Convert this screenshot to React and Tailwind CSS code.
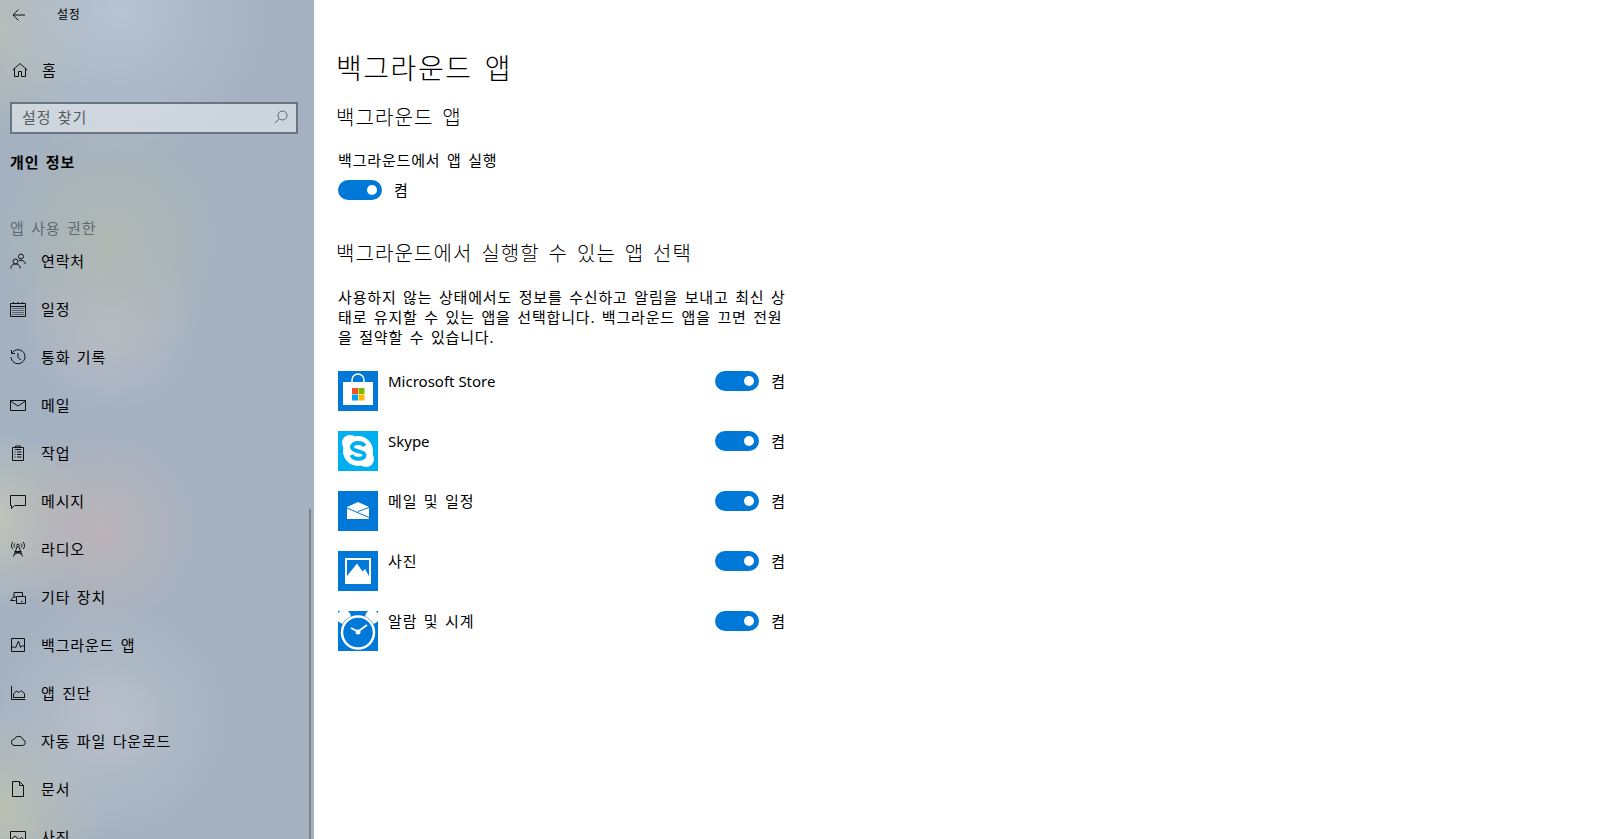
import React from 'react';

const FONT = "font-['Noto_Sans','Noto_Sans_CJK_KR',sans-serif]";
// Malgun-like hangul spacing
const KO = 'tracking-[0.055em] [word-spacing:0.125em]';

const Ico = ({ children }) => (
  <svg width="16" height="16" viewBox="0 0 16 16" fill="none" stroke="#111" strokeWidth="1" className="shrink-0">
    {children}
  </svg>
);

const navIcons = {
  contacts: (
    <Ico>
      <circle cx="5.5" cy="8.5" r="2.5" />
      <path d="M0.8 15.5c0-3 2-4.5 4.7-4.5s4.7 1.500 4.700 4.500" />
      <circle cx="11" cy="3.500" r="2.500" />
      <path d="M9 7.500c2.800-.8 6 .5 6.500 3.500" />
    </Ico>
  ),
  calendar: (
    <Ico>
      <path d="M0.500 2.500h15v13h-15z" />
      <path d="M0.500 5.500h15M3.500 1v2M8 1v2M12.500 1v2" />
      <path d="M2.500 7.500h11M2.500 9.500h11M2.500 11.500h11M2.500 13.500h11" strokeDasharray="1 1" />
    </Ico>
  ),
  history: (
    <Ico>
      <path d="M2.200 3.800A7 7 0 1 1 1 8" />
      <path d="M1.500 1v3.500H5M8 4v4.500l3 2.500" />
    </Ico>
  ),
  mail: (
    <Ico>
      <path d="M0.500 3.500h15v10h-15z" />
      <path d="M0.500 4l7.500 5 7.500-5" />
    </Ico>
  ),
  task: (
    <Ico>
      <path d="M2.500 2.500h11v13h-11zM5.500 2.500V1h5v1.500M5 4.500h6" />
      <path d="M4.500 7h1M7 7h4.500M4.500 9.500h1M7 9.500h4.500M4.500 12h1M7 12h4.500" />
    </Ico>
  ),
  message: (
    <Ico>
      <path d="M0.500 2.500h15v10H4.500l-3 3v-3h-1z" />
    </Ico>
  ),
  radio: (
    <Ico>
      <circle cx="8" cy="4.500" r="1.300" />
      <path d="M7 6l-3.500 9.500M9 6l3.500 9.500M5.500 10.500h5M4.500 13l7-2.500M11.500 13l-7-2.500" />
      <path d="M4.800 2.500c-1 1.300-1 2.700 0 4M11.200 2.500c1 1.300 1 2.700 0 4M2.800 1c-1.800 2.300-1.800 5.200 0 7M13.200 1c1.800 2.300 1.800 5.200 0 7" />
    </Ico>
  ),
  devices: (
    <Ico>
      <path d="M4 8V3.500h8.500V7" />
      <path d="M5.500 11.500H0.500L3.500 8h2.500" />
      <path d="M6.500 7.500h9v7h-9z" />
      <path d="M11 12.500h1.500" />
    </Ico>
  ),
  background: (
    <Ico>
      <path d="M1.500 1.500h13v13h-13z" />
      <path d="M1.500 11l2.500-1.500 1.500 1.500 3-7 2 6.500 1-1.500h3" />
    </Ico>
  ),
  diagnostics: (
    <Ico>
      <path d="M1.500 1v13.500H15.500" />
      <path d="M3.500 12.500h11M3.500 12.500V9l3-3 2.500 1.500 2-2 3.500 3v4.500" />
    </Ico>
  ),
  cloud: (
    <Ico>
      <path d="M4 12.500h8.500a3 3 0 0 0 .5-5.900A4.500 4.500 0 0 0 4.500 6 3.300 3.300 0 0 0 4 12.500z" />
    </Ico>
  ),
  document: (
    <Ico>
      <path d="M2.500 0.500h7l4 4v11h-11z" />
      <path d="M9.500 0.500v4h4" />
    </Ico>
  ),
  photo: (
    <Ico>
      <path d="M0.500 2.500h15v11h-15z" />
      <path d="M0.500 11l4.500-4 4 3.500 2.500-2 4 3.500" />
    </Ico>
  ),
};

const navItems = [
  ['contacts', '연락처'],
  ['calendar', '일정'],
  ['history', '통화 기록'],
  ['mail', '메일'],
  ['task', '작업'],
  ['message', '메시지'],
  ['radio', '라디오'],
  ['devices', '기타 장치'],
  ['background', '백그라운드 앱'],
  ['diagnostics', '앱 진단'],
  ['cloud', '자동 파일 다운로드'],
  ['document', '문서'],
  ['photo', '사진'],
];

const Toggle = () => (
  <div className="flex items-center gap-3">
    <div className="flex h-5 w-11 items-center justify-end rounded-full bg-[#0078d7] pr-[5px]">
      <div className="h-2.5 w-2.5 rounded-full bg-white" />
    </div>
    <span className={`text-[15px] leading-5 text-black ${KO}`}>켬</span>
  </div>
);

const StoreIcon = () => (
  <svg width="40" height="40" viewBox="0 0 40 40">
    <rect width="40" height="40" fill="#0078d7" />
    <path d="M14 12V9a6 6 0 0 1 12 0v3" fill="none" stroke="#fff" strokeWidth="1.500" />
    <path d="M5 11h30v23H5z" fill="#fff" />
    <rect x="14" y="17" width="6" height="6" fill="#f25022" />
    <rect x="20.500" y="17" width="6" height="6" fill="#7fba00" />
    <rect x="14" y="23.500" width="6" height="6" fill="#00a4ef" />
    <rect x="20.500" y="23.500" width="6" height="6" fill="#ffb900" />
  </svg>
);

const SkypeIcon = () => (
  <svg width="40" height="40" viewBox="0 0 40 40">
    <rect width="40" height="40" fill="#00aff0" />
    <circle cx="12" cy="12" r="8" fill="#fff" />
    <circle cx="28" cy="28" r="8" fill="#fff" />
    <circle cx="20" cy="20" r="15" fill="#fff" />
    <path d="M26.500 15c-1-2-3.500-3-6.500-3-3.500 0-6 1.600-6 4 0 5.500 12.500 3.200 12.500 8 0 2.300-2.500 3.800-6 3.800-3.500 0-6-1.300-7-3.800" fill="none" stroke="#00aff0" strokeWidth="4" />
  </svg>
);

const MailIcon = () => (
  <svg width="40" height="40" viewBox="0 0 40 40">
    <rect width="40" height="40" fill="#0078d7" />
    <path d="M20 11l11 5v12H9V16z" fill="#fff" />
    <path d="M9 17l22 9.500M31 16.500l-11 4" fill="none" stroke="#0078d7" strokeWidth="1" />
  </svg>
);

const PhotoIcon = () => (
  <svg width="40" height="40" viewBox="0 0 40 40">
    <rect width="40" height="40" fill="#0078d7" />
    <path d="M7 7h26v26H7z" fill="#fff" />
    <path d="M9 9h22v16l-4-7-2.500 2.500-5.500-8L9 25z" fill="#0078d7" />
  </svg>
);

const AlarmIcon = () => (
  <svg width="40" height="40" viewBox="0 0 40 40">
    <rect width="40" height="40" fill="#0078d7" />
    <circle cx="6" cy="6" r="7" fill="#fff" />
    <circle cx="34" cy="6" r="7" fill="#fff" />
    <circle cx="20" cy="22" r="18" fill="#0078d7" />
    <circle cx="20" cy="21.500" r="16" fill="none" stroke="#fff" strokeWidth="2.500" />
    <path d="M20 20.500l9-6.500M20 20.500l-7-3.500" stroke="#fff" strokeWidth="1.800" />
    <circle cx="20" cy="21" r="2.500" fill="#fff" />
  </svg>
);

const apps = [
  [StoreIcon, 'Microsoft Store', ''],
  [SkypeIcon, 'Skype', ''],
  [MailIcon, '메일 및 일정', KO],
  [PhotoIcon, '사진', KO],
  [AlarmIcon, '알람 및 시계', KO],
];

export default function App() {
  return (
    <div className={`flex h-[839px] w-[1609px] overflow-hidden bg-white text-black ${FONT}`}>
      {/* sidebar */}
      <aside className="relative h-full w-[314px] shrink-0 overflow-hidden bg-[#a3b1c1] bg-[radial-gradient(circle_at_120px_10px,#b6c3d0_0,transparent_150px),radial-gradient(circle_at_0px_30px,#b8bcb4_0,transparent_110px),radial-gradient(circle_at_110px_240px,#b0b8b2_0,transparent_130px),radial-gradient(circle_at_110px_325px,#bcbdc6_0,transparent_90px),radial-gradient(circle_at_100px_530px,#bbb4b8_0,transparent_110px),radial-gradient(circle_at_0px_520px,#c0c5ba_0,transparent_90px),radial-gradient(circle_at_110px_720px,#b9c0ca_0,transparent_120px),radial-gradient(circle_at_0px_810px,#bcc0b4_0,transparent_110px)]">
        <div className="flex h-[30px] items-center pl-3">
          <svg width="14" height="14" viewBox="0 0 14 14" fill="none" stroke="#111" strokeWidth="1">
            <path d="M13 7H1M6.500 1.500L1 7l5.500 5.500" />
          </svg>
          <span className={`ml-[31px] text-xs leading-4 ${KO}`}>설정</span>
        </div>

        <div className="mt-[24px] flex h-8 items-center gap-[14px] pl-3">
          <svg width="16" height="16" viewBox="0 0 16 16" fill="none" stroke="#111" strokeWidth="1">
            <path d="M0.800 8L8 1.500 15.200 8M2.500 6.500v8h4V9.500h3v5h4v-8" />
          </svg>
          <span className={`text-[15px] leading-5 ${KO}`}>홈</span>
        </div>

        <div className="mx-[10px] mt-[16px] flex h-[32px] w-[288px] items-center justify-between border-2 border-[#6a7480] bg-white/45 pb-[2px] pl-[10px] pr-2">
          <span className={`text-[15px] leading-5 text-[#555c63] ${KO}`}>설정 찾기</span>
          <svg width="14" height="14" viewBox="0 0 14 14" fill="none" stroke="#5b6168" strokeWidth="1">
            <circle cx="8.500" cy="5.500" r="4.500" />
            <path d="M5.300 8.700L1 13" />
          </svg>
        </div>

        <div className={`mt-[18px] pl-[10px] text-[15px] font-bold leading-5 ${KO}`}>개인 정보</div>

        <div className={`mt-[46px] pl-[10px] text-[15px] leading-5 text-[#5f6973] ${KO}`}>앱 사용 권한</div>

        <nav className="mt-[-1px]">
          {navItems.map(([icon, label]) => (
            <div key={label} className="flex h-12 items-center gap-[15px] pl-[10px]">
              {navIcons[icon]}
              <span className={`text-[15px] leading-5 ${KO}`}>{label}</span>
            </div>
          ))}
        </nav>

        {/* scrollbar */}
        <div className="absolute bottom-0 right-[3px] h-[330px] w-[2px] bg-[#7d8287]" />
      </aside>

      {/* content */}
      <main className="flex-1 pl-[22px]">
        <h1 className={`mt-[48px] text-[28px] font-light leading-10 ${KO}`}>백그라운드 앱</h1>
        <h2 className={`mt-[16px] text-xl font-light leading-7 ${KO}`}>백그라운드 앱</h2>

        <div className={`ml-[2px] mt-[18px] text-[15px] leading-5 ${KO}`}>백그라운드에서 앱 실행</div>
        <div className="ml-[2px] mt-[10px] w-fit"><Toggle /></div>

        <h2 className={`mt-[40px] text-xl font-light leading-7 ${KO}`}>백그라운드에서 실행할 수 있는 앱 선택</h2>

        <p className={`ml-[2px] mt-[19px] text-[15px] leading-5 ${KO}`}>
          사용하지 않는 상태에서도 정보를 수신하고 알림을 보내고 최신 상<br />
          태로 유지할 수 있는 앱을 선택합니다. 백그라운드 앱을 끄면 전원<br />
          을 절약할 수 있습니다.
        </p>

        <div className="ml-[2px] mt-[24px] flex w-[448px] flex-col gap-5">
          {apps.map(([Icon, name, spacing]) => (
            <div key={name} className="flex h-10 items-start justify-between">
              <div className="flex items-start gap-[10px]">
                <Icon />
                <span className={`text-[15px] leading-5 ${spacing}`}>{name}</span>
              </div>
              <Toggle />
            </div>
          ))}
        </div>
      </main>
    </div>
  );
}
